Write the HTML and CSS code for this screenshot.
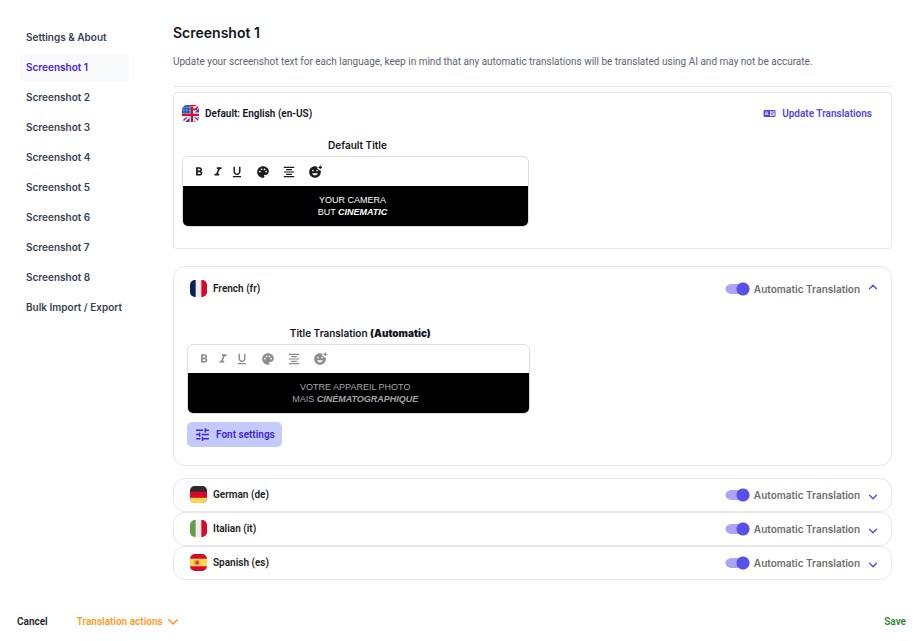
FILE: index.html
```html
<!DOCTYPE html>
<html lang="en">
<head>
  <meta charset="UTF-8" />
  <meta name="viewport" content="width=device-width, initial-scale=1" />
  <title>Screenshot 1</title>
  <link rel="stylesheet" href="styles.css">
</head>
<body>

  <!-- Shared icons -->
  <svg class="sprite" aria-hidden="true">
    <symbol id="bold" viewBox="0 0 24 24"><path d="M15.6 10.79c.97-.67 1.65-1.77 1.65-2.79 0-2.26-1.75-4-4-4H7v14h7.04c2.09 0 3.71-1.7 3.71-3.79 0-1.52-.86-2.82-2.15-3.42zM10 6.5h3c.83 0 1.5.67 1.5 1.5s-.67 1.5-1.5 1.5h-3v-3zm3.5 9H10v-3h3.5c.83 0 1.5.67 1.5 1.5s-.67 1.5-1.5 1.5z"/></symbol>
    <symbol id="italic" viewBox="0 0 24 24"><path d="M10 4v3h2.21l-3.42 8H6v3h8v-3h-2.21l3.42-8H18V4z"/></symbol>
    <symbol id="underline" viewBox="0 0 24 24"><path d="M12 17c3.31 0 6-2.69 6-6V3h-2.5v8c0 1.93-1.57 3.5-3.5 3.5S8.500 12.930 8.500 11V3H6v8c0 3.310 2.690 6 6 6zm-7 2v2h14v-2H5z"/></symbol>
    <symbol id="palette" viewBox="0 0 24 24"><path d="M12 2C6.490 2 2 6.490 2 12s4.490 10 10 10c1.380 0 2.500-1.120 2.500-2.500 0-.61-.23-1.200-.64-1.670-.08-.1-.13-.21-.13-.33 0-.28.22-.5.5-.5H16c3.310 0 6-2.690 6-6 0-4.960-4.490-9-10-9zm5.500 11c-.83 0-1.500-.67-1.500-1.500s.67-1.500 1.500-1.500 1.500.67 1.500 1.500-.67 1.500-1.500 1.500zm-3-4c-.83 0-1.500-.67-1.500-1.500S13.670 6 14.500 6s1.500.67 1.500 1.500S15.330 9 14.500 9zM5 11.500c0-.83.67-1.500 1.500-1.500s1.500.67 1.500 1.500S7.330 13 6.500 13 5 12.330 5 11.500zm6-4c0 .83-.67 1.500-1.500 1.500S8 8.330 8 7.500 8.670 6 9.500 6s1.500.67 1.500 1.500z"/></symbol>
    <symbol id="align" viewBox="0 0 24 24"><path d="M7 15v2h10v-2H7zm-4 6h18v-2H3v2zm0-8h18v-2H3v2zm4-6v2h10V7H7zM3 3v2h18V3H3z"/></symbol>
    <symbol id="emoji" viewBox="0 0 24 24"><path d="M18 9V7h-2V2.840C14.770 2.300 13.420 2 11.990 2 6.470 2 2 6.480 2 12s4.470 10 9.990 10C17.520 22 22 17.520 22 12c0-1.050-.17-2.050-.47-3H18zm-2.500-1c.83 0 1.500.67 1.500 1.500s-.67 1.500-1.500 1.500-1.500-.67-1.500-1.500.67-1.500 1.500-1.500zm-7 0c.83 0 1.500.67 1.500 1.500S9.330 11 8.500 11 7 10.330 7 9.500 7.670 8 8.500 8zm3.500 9.500c-2.330 0-4.310-1.460-5.110-3.500h10.220c-.8 2.040-2.780 3.500-5.110 3.500zM22 3h2v2h-2v2h-2V5h-2V3h2V1h2v2z"/></symbol>
    <symbol id="tune" viewBox="0 0 24 24"><path d="M3 17v2h6v-2H3zM3 5v2h10V5H3zm10 16v-2h8v-2h-8v-2h-2v6h2zM7 9v2H3v2h4v2h2V9H7zm14 4v-2H11v2h10zm-6-4h2V7h4V5h-4V3h-2v6z"/></symbol>
    <symbol id="chevron" viewBox="0 0 10 10"><path d="M1.500 3.200 5 6.700l3.500-3.500" fill="none" stroke="currentColor" stroke-width="1.300" stroke-linecap="round" stroke-linejoin="round"/></symbol>
  </svg>

  <div class="layout">
    <nav class="sidebar">
      <a href="#">Settings &amp; About</a>
      <a href="#" class="active">Screenshot 1</a>
      <a href="#">Screenshot 2</a>
      <a href="#">Screenshot 3</a>
      <a href="#">Screenshot 4</a>
      <a href="#">Screenshot 5</a>
      <a href="#">Screenshot 6</a>
      <a href="#">Screenshot 7</a>
      <a href="#">Screenshot 8</a>
      <a href="#">Bulk Import / Export</a>
    </nav>

    <main>
      <h1>Screenshot 1</h1>
      <p class="intro">Update your screenshot text for each language, keep in mind that any automatic translations will be translated using AI and may not be accurate.</p>

      <!-- Default language -->
      <section class="card default-card">
        <div class="card-head">
          <svg class="flag" viewBox="0 0 36 36">
            <rect width="36" height="36" fill="#f2f2f5"/>
            <path d="M36 0v36H0z" fill="#2352b0"/>
            <path d="M18 18 0 36M18 18l18 18M18 18 36 0" stroke="#fff" stroke-width="9"/>
            <path d="M18 18 0 36M20 18l16 16M20 16 36 2" stroke="#d80b33" stroke-width="3"/>
            <path d="M21 0v36M0 21h36" stroke="#fff" stroke-width="10"/>
            <path d="M21 3v33M0 21h36" stroke="#d80b33" stroke-width="5"/>
            <path d="M16 1h20M16 9h16" stroke="#d80b33" stroke-width="3"/>
            <rect width="18" height="18" fill="#1c4ca8"/>
            <path d="M0 5h18M0 11h18M4 0v18M10 0v18M16 0v18" stroke="#a9c0ea" stroke-width="1"/>
          </svg>
          <h2>Default: English (en-US)</h2>
          <button class="update">
            <svg viewBox="0 0 26 18">
              <rect x="1" y="2" width="24" height="14" rx="2" fill="currentColor"/>
              <path d="M14 4h9v10h-9z" fill="#fff" opacity=".85"/>
              <path d="m4 12 3-7 3 7M5 10h4" fill="none" stroke="#fff" stroke-width="1.500"/>
              <path d="M15 6h7M18.500 4.500V6M21 6c-1 3-3 5-5 6M16 8c1 2 3 3 5 4" fill="none" stroke="currentColor" stroke-width="1.200"/>
            </svg>
            Update Translations
          </button>
        </div>
        <div class="field">
          <h3 class="field-title">Default Title</h3>
          <div class="editor">
            <div class="toolbar">
              <button aria-label="Bold"><svg><use href="#bold"/></svg></button>
              <button aria-label="Italic"><svg><use href="#italic"/></svg></button>
              <button aria-label="Underline"><svg><use href="#underline"/></svg></button>
              <button class="wide" aria-label="Color"><svg><use href="#palette"/></svg></button>
              <button class="wide" aria-label="Align"><svg><use href="#align"/></svg></button>
              <button class="wide" aria-label="Emoji"><svg><use href="#emoji"/></svg></button>
            </div>
            <div class="text" contenteditable="true" role="textbox" aria-label="Default Title">YOUR CAMERA<br>BUT <b><i>CINEMATIC</i></b></div>
          </div>
        </div>
      </section>

      <!-- French -->
      <section class="card lang open">
        <div class="lang-head">
          <svg class="flag" viewBox="0 0 36 36"><rect width="36" height="36" fill="#eee"/><rect width="12" height="36" fill="#0b1f5c"/><rect x="24" width="12" height="36" fill="#d8082c"/></svg>
          <h2>French (fr)</h2>
          <label class="switch"><input type="checkbox" checked> Automatic Translation</label>
          <button class="toggle up" aria-label="Collapse French"><svg><use href="#chevron"/></svg></button>
        </div>
        <div class="lang-body">
          <div class="field">
            <h3 class="field-title">Title Translation <b>(Automatic)</b></h3>
            <div class="editor disabled">
              <div class="toolbar">
                <button disabled aria-label="Bold"><svg><use href="#bold"/></svg></button>
                <button disabled aria-label="Italic"><svg><use href="#italic"/></svg></button>
                <button disabled aria-label="Underline"><svg><use href="#underline"/></svg></button>
                <button disabled class="wide" aria-label="Color"><svg><use href="#palette"/></svg></button>
                <button disabled class="wide" aria-label="Align"><svg><use href="#align"/></svg></button>
                <button disabled class="wide" aria-label="Emoji"><svg><use href="#emoji"/></svg></button>
              </div>
              <div class="text">VOTRE APPAREIL PHOTO<br>MAIS <b><i>CINÉMATOGRAPHIQUE</i></b></div>
            </div>
          </div>
          <button class="font-settings"><svg><use href="#tune"/></svg>Font settings</button>
        </div>
      </section>

      <!-- Collapsed languages -->
      <section class="card lang">
        <div class="lang-head">
          <svg class="flag" viewBox="0 0 36 36"><rect width="36" height="36" fill="#d8082c"/><rect width="36" height="12" fill="#2b2b2b"/><rect y="25" width="36" height="11" fill="#ffd84a"/></svg>
          <h2>German (de)</h2>
          <label class="switch"><input type="checkbox" checked> Automatic Translation</label>
          <button class="toggle" aria-label="Expand German"><svg><use href="#chevron"/></svg></button>
        </div>
      </section>
      <section class="card lang">
        <div class="lang-head">
          <svg class="flag" viewBox="0 0 36 36"><rect width="36" height="36" fill="#eee"/><rect width="12" height="36" fill="#629f47"/><rect x="24" width="12" height="36" fill="#d8082c"/></svg>
          <h2>Italian (it)</h2>
          <label class="switch"><input type="checkbox" checked> Automatic Translation</label>
          <button class="toggle" aria-label="Expand Italian"><svg><use href="#chevron"/></svg></button>
        </div>
      </section>
      <section class="card lang">
        <div class="lang-head">
          <svg class="flag" viewBox="0 0 36 36"><rect width="36" height="36" fill="#d8082c"/><rect y="10" width="36" height="16" fill="#ffd84a"/><path d="M11 14h8v7q-4 4-8 0z" fill="#dc5a35"/><path d="M9 15v8M21 15v8" stroke="#c98a4a" stroke-width="1.500"/><circle cx="15" cy="18" r="2" fill="#9c3860"/></svg>
          <h2>Spanish (es)</h2>
          <label class="switch"><input type="checkbox" checked> Automatic Translation</label>
          <button class="toggle" aria-label="Expand Spanish"><svg><use href="#chevron"/></svg></button>
        </div>
      </section>
    </main>
  </div>

  <footer>
    <button>Cancel</button>
    <button class="actions">Translation actions <svg><use href="#chevron"/></svg></button>
    <button class="save">Save</button>
  </footer>

</body>
</html>
```
FILE: styles.css
```css
* {
  box-sizing: border-box;
}

body {
  margin: 0;
  background: #fff;
  color: #111322;
  font-family: Roboto, "Liberation Sans", sans-serif;
  font-size: 10px;
  line-height: 16px;
}

h1, h2, h3, p {
  margin: 0;
}

button {
  padding: 0;
  border: none;
  background: none;
  color: inherit;
  font: inherit;
  font-weight: 600;
  cursor: pointer;
}

svg {
  display: block;
  fill: currentColor;
}

.sprite {
  display: none;
}

.layout {
  display: grid;
  grid-template-columns: 109px 1fr;
  gap: 44px;
  padding: 23px 28px 0 20px;
}

/* Sidebar */
.sidebar {
  display: flex;
  flex-direction: column;
  gap: 3px;
  padding-top: 1px;
  font-family: Inter, sans-serif;
}

.sidebar a {
  padding: 6px;
  border-radius: 4px;
  color: #374151;
  font-weight: 600;
  line-height: 15px;
  text-decoration: none;
  white-space: nowrap;
}

.sidebar a.active {
  background: #f9fafb;
  color: #4523dc;
}

/* Main */
h1 {
  font-family: Inter, sans-serif;
  font-size: 14px;
  font-weight: 600;
  line-height: 20px;
}

.intro {
  margin-bottom: 5px;
  padding: 11px 0 16px;
  border-bottom: 1px solid #e5e7eb;
  color: #5d6473;
}

h2, h3 {
  font-size: 10px;
  font-weight: 600;
}

.card {
  border: 1px solid #e5e7eb;
}

.default-card {
  margin-bottom: 17px;
  padding: 12px 15px 21px 8px;
  border-radius: 4px;
}

.card-head, .lang-head {
  display: flex;
  align-items: center;
}

.flag {
  width: 17px;
  height: 17px;
  margin-right: 6px;
  border-radius: 5px;
  overflow: hidden;
}

.update {
  display: flex;
  align-items: center;
  gap: 6px;
  margin-left: auto;
  margin-right: 4px;
  color: #5448e5;
}

.update svg {
  width: 13px;
  height: 9px;
}

.field {
  width: 50%;
}

.field-title {
  padding-left: 4px;
  font-family: Inter, sans-serif;
  text-align: center;
}

.default-card .field {
  margin-top: 15px;
}

.editor {
  margin-top: 3px;
  border: 1px solid #dcdee3;
  border-radius: 6px;
  overflow: hidden;
}

.toolbar {
  display: flex;
  align-items: center;
  height: 29px;
  padding-left: 6px;
  color: #1c1c1c;
}

.toolbar button {
  display: flex;
  justify-content: center;
  width: 19px;
}

.toolbar .wide {
  width: 26px;
}

.toolbar .wide:nth-child(4) {
  margin-left: 4px;
}

.toolbar svg {
  width: 14px;
  height: 14px;
}

.text {
  padding: 8px 14px 8px 8px;
  background: #000;
  color: #fff;
  font-family: "Liberation Sans", Arial, sans-serif;
  font-size: 9px;
  line-height: 12px;
  text-align: center;
}

.disabled .toolbar {
  height: 28px;
  color: #8c8c8c;
}

.disabled .text {
  color: #a6a6a6;
}

/* Languages */
.lang {
  padding: 7px 13px 8px 16px;
  border-radius: 12px;
}

.lang.open {
  margin-bottom: 12px;
  padding-top: 13px;
  padding-bottom: 18px;
}

.lang h2 {
  color: #202124;
}

.switch {
  display: flex;
  align-items: center;
  gap: 4px;
  margin-left: auto;
  color: #6e6e6e;
  font-family: Inter, sans-serif;
  font-weight: 600;
}

.switch input {
  appearance: none;
  width: 25px;
  height: 14px;
  margin: 0;
  background:
    radial-gradient(circle at 18px 7px, #5850ec 6px, transparent 7px),
    linear-gradient(#aaa5f6, #aaa5f6) 5px 2px / 13px 10px no-repeat,
    radial-gradient(circle at 5px 7px, #aaa5f6 4px, transparent 5px);
}

.toggle {
  margin: 4px 0 0 8px;
  color: #4f46e5;
}

.toggle svg {
  width: 10px;
  height: 10px;
}

.toggle.up {
  margin: 0 0 4px 8px;
  transform: rotate(180deg);
}

.lang-body {
  margin: 28px 6px 0 -3px;
}

.font-settings {
  display: flex;
  align-items: center;
  gap: 5px;
  height: 25px;
  margin-top: 8px;
  padding: 0 7px;
  border-radius: 5px;
  background: #c3cbfe;
  color: #4422cf;
}

.font-settings svg {
  width: 17px;
  height: 17px;
}

/* Footer */
footer {
  display: flex;
  align-items: center;
  padding: 34px 14px 11px 17px;
  color: #222;
}

.actions {
  display: flex;
  align-items: center;
  gap: 4px;
  margin-left: 29px;
  color: #ff9c1e;
}

.actions svg {
  width: 12px;
  height: 12px;
}

.save {
  margin-left: auto;
  color: #2e8532;
}
```
